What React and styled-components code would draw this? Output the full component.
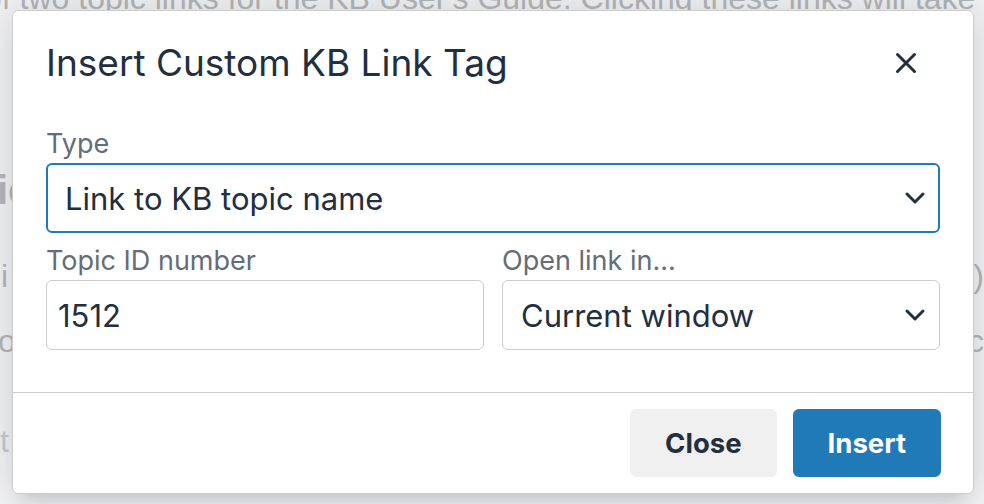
import React from "react";
import styled, { createGlobalStyle } from "styled-components";

const GlobalStyle = createGlobalStyle`
  html, body { margin: 0; padding: 0; }
  body {
    background: #f1f1f2;
    font-family: Inter, "Noto Sans", sans-serif;
  }
  * { box-sizing: border-box; }
`;

const Stage = styled.div`
  position: relative;
  width: 984px;
  height: 504px;
  overflow: hidden;
`;

/* ---------- faded page content behind the dialog ---------- */
const Page = styled.div`
  display: flex;
  flex-direction: column;
  margin-top: -20px;
  font-family: "Liberation Sans", Arial, sans-serif;
  font-size: 32px;
  line-height: 36px;
  color: #b3b4b6;
  white-space: nowrap;
`;

const PageLine = styled.div`
  display: flex;
  justify-content: space-between;
  margin-top: ${(p) => p.$gap || 0}px;
  margin-left: ${(p) => p.$shift || 0}px;
  font-size: ${(p) => p.$size || 32}px;
  line-height: ${(p) => p.$lh || 36}px;
  font-weight: ${(p) => (p.$bold ? 700 : 400)};
  color: ${(p) => p.$color || "#b3b4b6"};
`;

/* ---------- dialog ---------- */
const Backdrop = styled.div`
  position: absolute;
  inset: 0;
  display: flex;
  padding: 10px 10px 10px 12px;
`;

const Dialog = styled.div`
  flex: 1;
  display: flex;
  flex-direction: column;
  background: #ffffff;
  border: 1px solid #cccccc;
  border-radius: 6px;
  box-shadow: 0 16px 16px -10px rgba(34, 47, 62, 0.15),
    0 0 40px 1px rgba(34, 47, 62, 0.15);
  color: #222f3e;
`;

const Header = styled.div`
  display: flex;
  align-items: center;
  justify-content: space-between;
  padding: 30px 43px 0 33px;
`;

const Title = styled.h1`
  margin: 0;
  font-size: 37px;
  line-height: 44px;
  font-weight: 400;
  color: #222f3e;
`;

const CloseIcon = styled.button`
  width: 48px;
  height: 44px;
  padding: 0;
  border: 0;
  background: transparent;
  display: flex;
  align-items: center;
  justify-content: center;
  color: #222f3e;
  cursor: pointer;
`;

const Body = styled.div`
  flex: 1;
  display: flex;
  flex-direction: column;
  gap: 12px;
  padding: 43px 33px 42px;
`;

const Row = styled.div`
  display: grid;
  grid-template-columns: 1fr 1fr;
  column-gap: 18px;
`;

const Field = styled.div`
  display: flex;
  flex-direction: column;
  gap: 3px;
  min-width: 0;
`;

const Label = styled.label`
  font-size: 27px;
  line-height: 32px;
  color: #646d77;
`;

const SelectWrap = styled.div`
  position: relative;
  display: flex;
`;

const Select = styled.select`
  appearance: none;
  -webkit-appearance: none;
  width: 100%;
  height: 70px;
  margin: 0;
  padding: 0 48px 0 ${(p) => (p.$focused ? 17 : 18)}px;
  border: ${(p) => (p.$focused ? "2px solid #207ab7" : "1px solid #cccccc")};
  border-radius: 6px;
  background: #ffffff;
  font-family: Inter, "Noto Sans", sans-serif;
  font-size: 31px;
  color: #222f3e;
  outline: none;
`;

const Chevron = styled.svg`
  position: absolute;
  right: 14px;
  top: 50%;
  margin-top: -7px;
  pointer-events: none;
  color: #222f3e;
`;

const Input = styled.input`
  width: 100%;
  height: 70px;
  margin: 0;
  padding: 0 11px;
  border: 1px solid #cccccc;
  border-radius: 6px;
  background: #ffffff;
  font-family: Inter, "Noto Sans", sans-serif;
  font-size: 31px;
  color: #222f3e;
  outline: none;
`;

const Footer = styled.div`
  display: flex;
  justify-content: flex-end;
  gap: 16px;
  padding: 16px 32px;
  border-top: 1px solid #cccccc;
`;

const Button = styled.button`
  height: 68px;
  padding: 0 33px;
  border-radius: 6px;
  border: 2px solid ${(p) => (p.$primary ? "#207ab7" : "#f0f0f0")};
  background: ${(p) => (p.$primary ? "#207ab7" : "#f0f0f0")};
  color: ${(p) => (p.$primary ? "#ffffff" : "#222f3e")};
  font-family: Inter, "Noto Sans", sans-serif;
  font-size: 27.5px;
  font-weight: 700;
  cursor: pointer;
`;

const ChevronIcon = () => (
  <Chevron width="22" height="14" viewBox="0 0 22 14" fill="none">
    <polyline
      points="3,3 11,11 19,3"
      stroke="currentColor"
      strokeWidth="3"
      strokeLinecap="round"
      strokeLinejoin="round"
    />
  </Chevron>
);

export default function App() {
  return (
    <Stage>
      <GlobalStyle />
      <Page aria-hidden="true">
        <PageLine $shift={-16}>
          <span>of two topic links for the KB User's Guide. Clicking these links will take</span>
        </PageLine>
        <PageLine $gap={150} $size={40} $lh={48} $bold $shift={-3}>
          <span>ic</span>
        </PageLine>
        <PageLine $gap={44} $shift={1}>
          <span>i</span>
          <span>u)</span>
        </PageLine>
        <PageLine $gap={29} $shift={-2}>
          <span>o</span>
          <span>c</span>
        </PageLine>
        <PageLine $gap={64} $color="#c3cad1">
          <span>t</span>
        </PageLine>
      </Page>

      <Backdrop>
        <Dialog role="dialog" aria-label="Insert Custom KB Link Tag">
          <Header>
            <Title>Insert Custom KB Link Tag</Title>
            <CloseIcon aria-label="Close">
              <svg width="22" height="22" viewBox="0 0 22 22" fill="none">
                <path
                  d="M2.5 2.5 L19.5 19.5 M19.5 2.5 L2.5 19.5"
                  stroke="currentColor"
                  strokeWidth="3"
                  strokeLinecap="round"
                />
              </svg>
            </CloseIcon>
          </Header>

          <Body>
            <Field>
              <Label htmlFor="kb-type">Type</Label>
              <SelectWrap>
                <Select id="kb-type" $focused defaultValue="name">
                  <option value="name">Link to KB topic name</option>
                  <option value="id">Link to KB topic ID</option>
                </Select>
                <ChevronIcon />
              </SelectWrap>
            </Field>

            <Row>
              <Field>
                <Label htmlFor="kb-id">Topic ID number</Label>
                <Input id="kb-id" defaultValue="1512" />
              </Field>
              <Field>
                <Label htmlFor="kb-target">Open link in...</Label>
                <SelectWrap>
                  <Select id="kb-target" defaultValue="current">
                    <option value="current">Current window</option>
                    <option value="new">New window</option>
                  </Select>
                  <ChevronIcon />
                </SelectWrap>
              </Field>
            </Row>
          </Body>

          <Footer>
            <Button>Close</Button>
            <Button $primary>Insert</Button>
          </Footer>
        </Dialog>
      </Backdrop>
    </Stage>
  );
}
